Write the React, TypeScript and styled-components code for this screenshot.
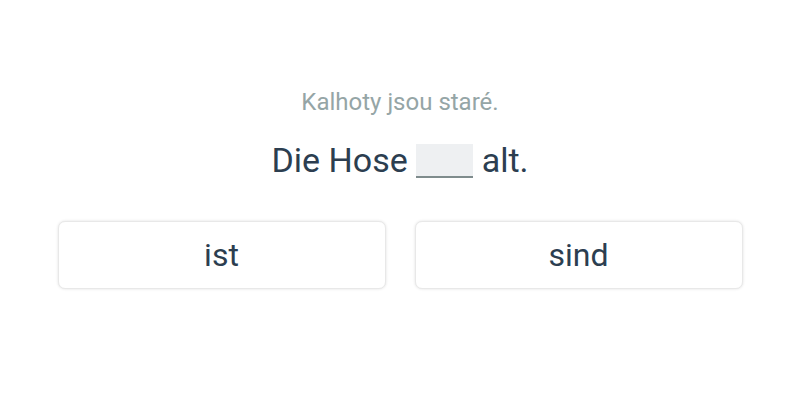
import React from "react";
import styled, { createGlobalStyle } from "styled-components";

const GlobalStyle = createGlobalStyle`
  body {
    margin: 0;
    background: #ffffff;
    font-family: Roboto, "Liberation Sans", sans-serif;
  }
`;

export default function App() {
  const options = ["ist", "sind"];
  return (
    <>
      <GlobalStyle />
      <Page>
        <Translation>Kalhoty jsou staré.</Translation>
        <Sentence>
          Die Hose <Blank /> alt.
        </Sentence>
        <Options>
          {options.map((o) => (
            <OptionButton key={o}>{o}</OptionButton>
          ))}
        </Options>
      </Page>
    </>
  );
}

const Page = styled.div`
  width: 800px;
  height: 400px;
  box-sizing: border-box;
  padding-top: 88px;
  display: flex;
  flex-direction: column;
  align-items: center;
`;

const Translation = styled.div`
  color: #95a5a6;
  font-size: 24px;
  line-height: 28px;
`;

const Sentence = styled.div`
  margin-top: 24px;
  color: #2c3e50;
  font-size: 34px;
  line-height: 40px;
  display: flex;
  align-items: center;
  white-space: pre;
`;

const Blank = styled.span`
  display: inline-block;
  width: 57px;
  height: 32px;
  background: #eef0f2;
  border-bottom: 2px solid #7f8c8d;
  margin-top: 2px;
`;

const Options = styled.div`
  margin-top: 41px;
  display: grid;
  grid-template-columns: 328px 328px;
  gap: 29px;
`;

const OptionButton = styled.button`
  height: 68px;
  background: #ffffff;
  border: 1px solid #e8e8e8;
  border-radius: 7px;
  box-shadow: 0 0 3px rgba(0, 0, 0, 0.12);
  color: #2c3e50;
  font-family: Roboto, "Liberation Sans", sans-serif;
  font-size: 32px;
  cursor: pointer;
`;
